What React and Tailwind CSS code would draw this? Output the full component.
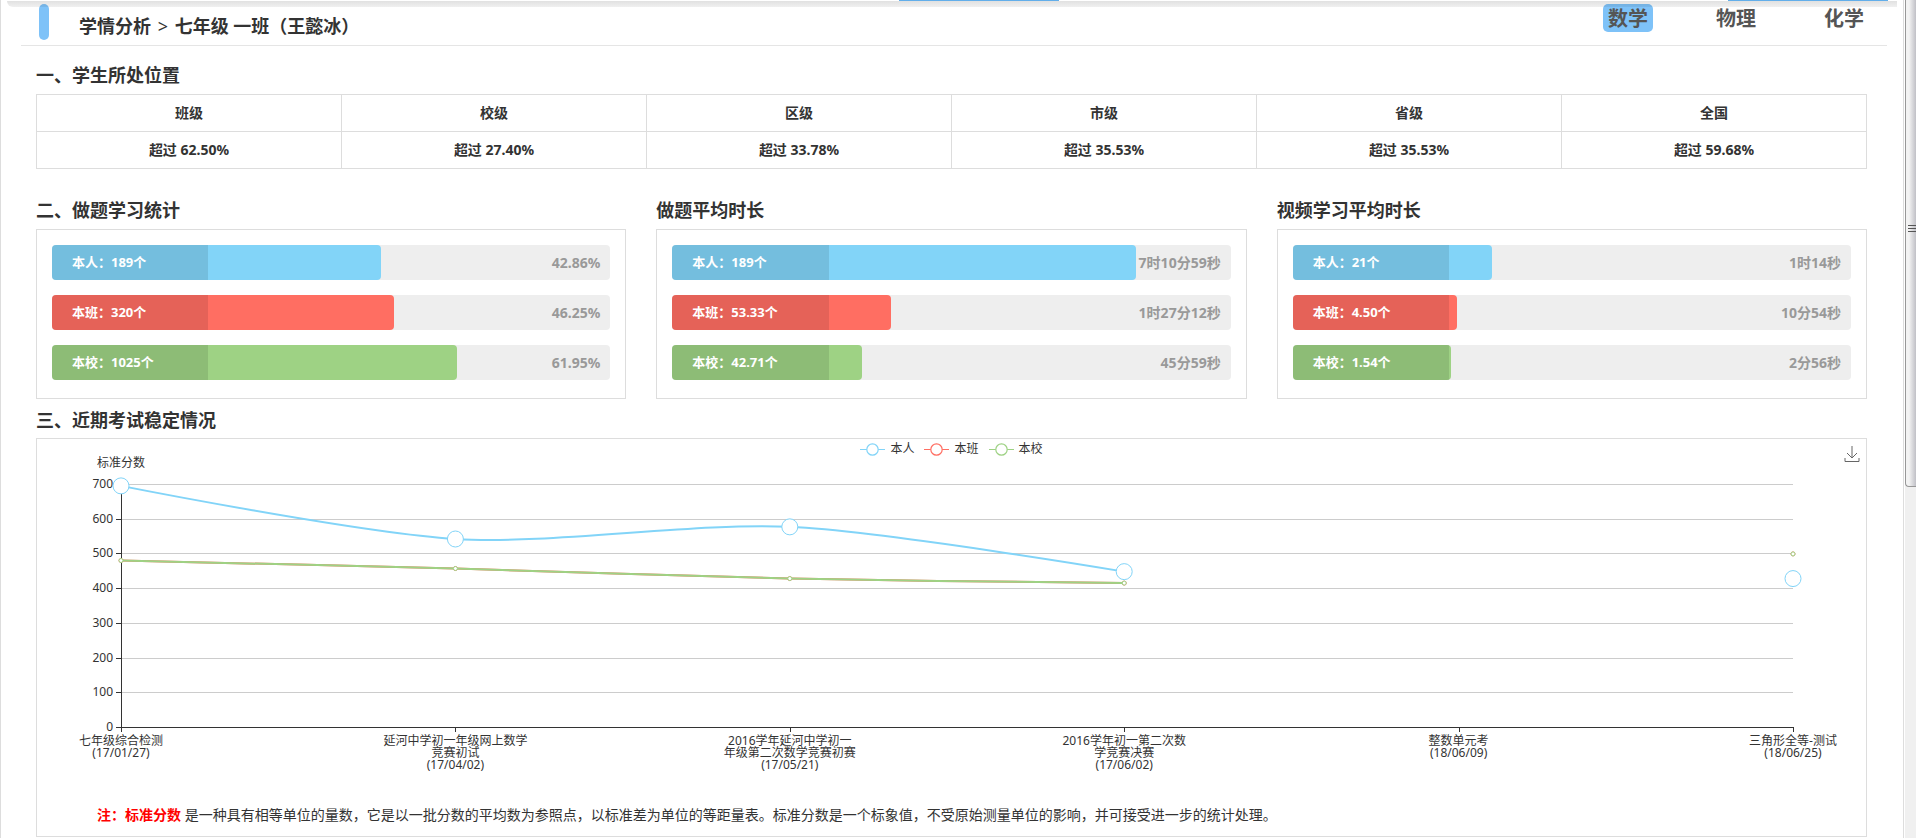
import { clsx } from 'clsx';

const SUBJECTS = ['数学', '物理', '化学'];

const RANKS = [
  { level: '班级', value: '62.50%' },
  { level: '校级', value: '27.40%' },
  { level: '区级', value: '33.78%' },
  { level: '市级', value: '35.53%' },
  { level: '省级', value: '35.53%' },
  { level: '全国', value: '59.68%' },
];

// percent: 除标签外剩余 72% 宽度中的占比
const STATS = [
  {
    title: '二、做题学习统计',
    rows: [
      { label: '本人：189个', value: '42.86%', percent: 42.86 },
      { label: '本班：320个', value: '46.25%', percent: 46.25 },
      { label: '本校：1025个', value: '61.95%', percent: 61.95 },
    ],
  },
  {
    title: '做题平均时长',
    rows: [
      { label: '本人：189个', value: '7时10分59秒', percent: 76.5 },
      { label: '本班：53.33个', value: '1时27分12秒', percent: 15.5 },
      { label: '本校：42.71个', value: '45分59秒', percent: 8.2 },
    ],
  },
  {
    title: '视频学习平均时长',
    rows: [
      { label: '本人：21个', value: '1时14秒', percent: 10.7 },
      { label: '本班：4.50个', value: '10分54秒', percent: 1.9 },
      { label: '本校：1.54个', value: '2分56秒', percent: 0.5 },
    ],
  },
];

const BAR_COLORS = ['bg-[#82d4f8]', 'bg-[#ff6e62]', 'bg-[#9ed284]'];

const SERIES = [
  { name: '本人', color: '#82d4f8', radius: 8, data: [696, 543, 578, 449, null, 429] },
  { name: '本班', color: '#ff6e62', radius: 2, data: [481, 458, 429, 416, null, 500] },
  { name: '本校', color: '#9ed284', radius: 2, data: [481, 458, 429, 416, null, 500] },
];

const EXAMS = [
  ['七年级综合检测', '(17/01/27)'],
  ['延河中学初一年级网上数学', '竞赛初试', '(17/04/02)'],
  ['2016学年延河中学初一', '年级第二次数学竞赛初赛', '(17/05/21)'],
  ['2016学年初一第二次数', '学竞赛决赛', '(17/06/02)'],
  ['整数单元考', '(18/06/09)'],
  ['三角形全等-测试', '(18/06/25)'],
];

const CHART = { width: 1829, height: 318, left: 84, right: 1756, top: 27, bottom: 270 };

const xAt = (i) => CHART.left + (i * (CHART.right - CHART.left)) / (EXAMS.length - 1);
const yAt = (v) => CHART.bottom - (v * (CHART.bottom - CHART.top)) / 700;

function smoothPath(data) {
  const points = [];
  for (let i = 0; i < data.length && data[i] !== null; i++) {
    points.push([xAt(i), yAt(data[i])]);
  }
  const last = points.length - 1;
  const tangent = (i) =>
    i === 0 || i === last
      ? [0, 0]
      : [
          (points[i + 1][0] - points[i - 1][0]) / 7,
          (points[i + 1][1] - points[i - 1][1]) / 7,
        ];

  return points.reduce((path, [x, y], i) => {
    if (i === 0) return `M${x} ${y}`;
    const [px, py] = points[i - 1];
    const [ax, ay] = tangent(i - 1);
    const [bx, by] = tangent(i);
    return `${path} C${px + ax} ${py + ay} ${x - bx} ${y - by} ${x} ${y}`;
  }, '');
}

function SectionTitle({ children }) {
  return <h2 className="text-lg leading-7 font-bold">{children}</h2>;
}

function Header() {
  return (
    <header className="mr-4 ml-5 flex h-[46px] items-start justify-between border-b border-[#e5e5e5] pt-1 pr-[18px] pl-[18px]">
      <div className="flex items-center">
        <span className="h-9 w-[10px] rounded-full bg-[#7ec2f8]" />
        <h1 className="pt-2 pl-[30px] text-lg leading-7 font-bold">
          学情分析 <span className="mx-[2px] font-normal">&gt;</span> 七年级 一班（王懿冰）
        </h1>
      </div>
      <nav className="flex gap-[58px]">
        {SUBJECTS.map((subject, i) => (
          <button
            key={subject}
            type="button"
            className={clsx(
              'h-7 rounded-[5px] px-[5px] text-xl leading-[30px] font-bold text-[#555]',
              i === 0 && 'bg-[#7ec2f8]',
            )}
          >
            {subject}
          </button>
        ))}
      </nav>
    </header>
  );
}

function RankTable() {
  return (
    <table className="mt-[5px] w-full table-fixed border-collapse text-center text-sm font-bold">
      <thead>
        <tr className="h-[37px]">
          {RANKS.map((rank) => (
            <th key={rank.level} scope="col" className="border border-[#ddd]">
              {rank.level}
            </th>
          ))}
        </tr>
      </thead>
      <tbody>
        <tr className="h-[37px]">
          {RANKS.map((rank) => (
            <td key={rank.level} className="border border-[#ddd]">
              超过 {rank.value}
            </td>
          ))}
        </tr>
      </tbody>
    </table>
  );
}

function StatBar({ row, color }) {
  return (
    <div className="relative flex h-[35px] items-center justify-end rounded bg-[#eee] pr-[10px]">
      <div
        className={clsx('absolute inset-y-0 left-0 rounded', color)}
        style={{ width: `${28 + row.percent * 0.72}%` }}
      />
      <div className="absolute inset-y-0 left-0 flex w-[28%] items-center rounded-l bg-black/10 pl-5 text-[13px] font-bold text-white">
        {row.label}
      </div>
      <span className="relative text-sm font-bold text-[#999]">{row.value}</span>
    </div>
  );
}

function StatPanel({ title, rows }) {
  return (
    <section>
      <SectionTitle>{title}</SectionTitle>
      <div className="mt-[5px] flex flex-col gap-[15px] border border-[#ddd] px-[15px] pt-[15px] pb-[18px]">
        {rows.map((row, i) => (
          <StatBar key={row.label} row={row} color={BAR_COLORS[i]} />
        ))}
      </div>
    </section>
  );
}

function Legend() {
  return (
    <div className="flex justify-center gap-[10px] pt-[2px]">
      {SERIES.map((series) => (
        <button key={series.name} type="button" className="flex items-center gap-[5px] text-xs leading-4">
          <svg className="h-[14px] w-[25px]" viewBox="0 0 25 14" fill="#fff" stroke={series.color}>
            <path d="M0 7.5H25" />
            <circle cx="12.5" cy="7.5" r="5.7" strokeWidth="1.2" />
          </svg>
          {series.name}
        </button>
      ))}
    </div>
  );
}

function ScoreChart() {
  const ticks = [0, 100, 200, 300, 400, 500, 600, 700];

  return (
    <svg
      className="block w-full overflow-visible text-xs"
      viewBox={`0 0 ${CHART.width} ${CHART.height}`}
      fill="#333"
      role="img"
      aria-label="近期考试标准分数"
    >
      <text x={CHART.left} y="10" textAnchor="middle">
        标准分数
      </text>

      {ticks.map((tick) => {
        const y = Math.round(yAt(tick));
        return (
          <g key={tick} shapeRendering="crispEdges">
            {tick > 0 && <rect x={CHART.left} y={y} width={CHART.right - CHART.left} height="1" fill="#ccc" />}
            <rect x={CHART.left - 5} y={y} width="5" height="1" />
            <text x={CHART.left - 8} y={y + 4} textAnchor="end">
              {tick}
            </text>
          </g>
        );
      })}

      <g shapeRendering="crispEdges">
        <rect x={CHART.left} y={CHART.top} width="1" height={CHART.bottom - CHART.top} />
        <rect x={CHART.left} y={CHART.bottom} width={CHART.right - CHART.left + 1} height="1" />
      </g>

      {EXAMS.map((lines, i) => (
        <g key={lines[0]}>
          <rect x={Math.round(xAt(i))} y={CHART.bottom} width="1" height="5" shapeRendering="crispEdges" />
          {lines.map((line, n) => (
            <text key={line} x={xAt(i)} y={CHART.bottom + 18 + n * 12} textAnchor="middle">
              {line}
            </text>
          ))}
        </g>
      ))}

      {SERIES.map((series) => (
        <g key={series.name} stroke={series.color} transform="translate(0 0.5)">
          <path d={smoothPath(series.data)} fill="none" strokeWidth="2" />
          {series.data.map(
            (value, i) =>
              value !== null && (
                <circle key={EXAMS[i][0]} cx={xAt(i)} cy={yAt(value)} r={series.radius} fill="#fff" />
              ),
          )}
        </g>
      ))}
    </svg>
  );
}

function TrendPanel() {
  return (
    <section className="mt-[7px]">
      <SectionTitle>三、近期考试稳定情况</SectionTitle>
      <div className="relative mt-1 border border-[#ddd]">
        <Legend />
        <button type="button" aria-label="保存为图片" className="absolute top-[6px] right-[6px] h-[18px] w-4">
          <svg className="h-[18px] w-4" viewBox="0 0 16 18" fill="none" stroke="#666">
            <path d="M8 1V13M3 8L8 13L13 8M1 13V16.5H15V13" />
          </svg>
        </button>
        <ScoreChart />
        <p className="px-[60px] pt-[30px] pb-[11px] text-sm leading-5">
          <strong className="text-[#f00]">注：标准分数</strong>{' '}
          是一种具有相等单位的量数，它是以一批分数的平均数为参照点，以标准差为单位的等距量表。标准分数是一个标象值，不受原始测量单位的影响，并可接受进一步的统计处理。
        </p>
      </div>
    </section>
  );
}

function Scrollbar() {
  return (
    <div className="flex w-3 shrink-0 flex-col border-l border-white bg-[#f0f0f0]" aria-hidden="true">
      <div className="flex h-[487px] items-center justify-end rounded-bl-sm border-b border-l border-[#979797] bg-linear-to-r from-[#f3f3f3] from-30% to-[#c0c0c6] pb-[30px]">
        <div className="flex w-2 flex-col gap-[2px]">
          <span className="h-px bg-[#555]" />
          <span className="h-px bg-[#555]" />
          <span className="h-px bg-[#555]" />
        </div>
      </div>
    </div>
  );
}

export default function App() {
  return (
    <div className="flex min-h-screen bg-white font-['Noto_Sans','Noto_Sans_CJK_SC',sans-serif] text-[#333]">
      <div className="relative min-w-0 flex-1 border-x border-[#ddd]">
        <div className="absolute inset-x-[6px] top-px h-[6px] rounded-bl-lg bg-linear-to-b from-black/12 to-black/6" />
        <div className="absolute top-0 left-[47.2%] h-px w-40 bg-[#62aeea]" />
        <div className="absolute top-0 right-[15px] h-px w-40 bg-[#62aeea]" />
        <Header />
        <main className="pt-[15px] pr-9 pl-[35px]">
          <SectionTitle>一、学生所处位置</SectionTitle>
          <RankTable />
          <div className="mt-[27px] grid grid-cols-3 gap-[30px]">
            {STATS.map((stat) => (
              <StatPanel key={stat.title} {...stat} />
            ))}
          </div>
          <TrendPanel />
        </main>
      </div>
      <Scrollbar />
    </div>
  );
}
